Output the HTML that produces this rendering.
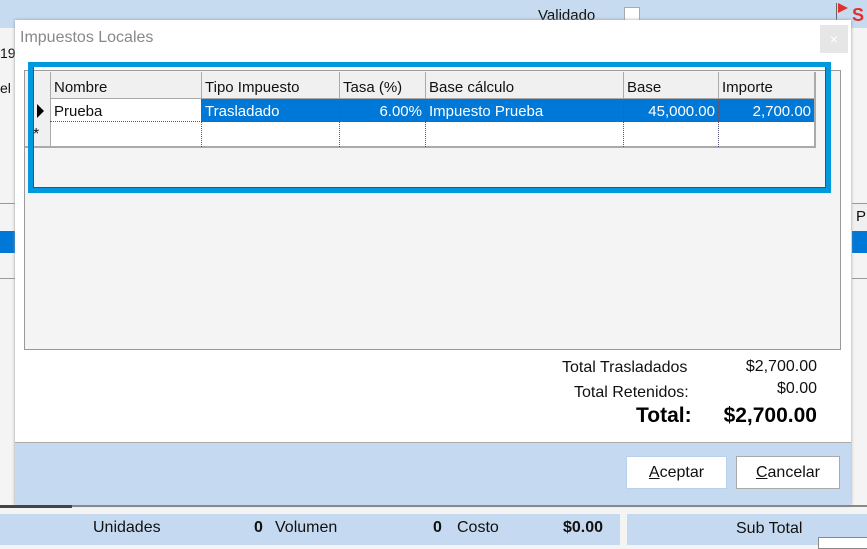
<!DOCTYPE html>
<html><head><style>
body{margin:0;width:867px;height:545px;overflow:hidden;background:#f4f4f4;font-family:"Liberation Sans",sans-serif;position:relative}
.a{position:absolute}
.t{font-size:15px;color:#111}
.n{font-family:"Liberation Sans Narrow","Liberation Sans",sans-serif}
</style></head><body>
<div class="a" style="left:0;top:0;width:867px;height:28px;background:#c6daf0"></div>
<div class="a t" style="left:538px;top:7px">Validado</div>
<div class="a" style="left:624px;top:7px;width:14px;height:14px;background:#fff;border:1px solid #aaa"></div>
<div class="a" style="left:838px;top:3px;width:0;height:0;border-left:10px solid #e0302a;border-top:5px solid transparent;border-bottom:5px solid transparent"></div>
<div class="a" style="left:836px;top:3px;width:1px;height:18px;background:#666"></div>
<div class="a" style="left:852px;top:5px;color:#e0302a;font-weight:bold;font-size:18px">S</div>
<div class="a t" style="left:0;top:45px;font-size:14px">19</div>
<div class="a t" style="left:0;top:80px;font-size:14px">el</div>
<div class="a" style="left:0;top:203px;width:15px;height:1px;background:#999"></div>
<div class="a" style="left:0;top:231px;width:15px;height:22px;background:#0078d7"></div>
<div class="a" style="left:0;top:278px;width:15px;height:1px;background:#999"></div>
<div class="a" style="left:852px;top:203px;width:15px;height:27px;background:#f0f0f0;border-top:1px solid #999"></div>
<div class="a t" style="left:856px;top:208px">P</div>
<div class="a" style="left:852px;top:231px;width:15px;height:22px;background:#0078d7"></div>
<div class="a" style="left:852px;top:278px;width:15px;height:1px;background:#999"></div>
<!-- dialog -->
<div class="a" style="left:15px;top:20px;width:836px;height:485px;background:#fff;box-shadow:0 0 3px #999"></div>
<div class="a" style="left:20px;top:29px;font-size:16px;color:#888">Impuestos Locales</div>
<div class="a" style="left:820px;top:25px;width:28px;height:28px;background:#e6e6e6;color:#fff;text-align:center;line-height:28px;font-size:14px">×</div>
<div class="a" style="left:24px;top:70px;width:815px;height:278px;background:#f4f4f4;border:1px solid #999"></div>
<!-- grid -->
<div class="a" style="left:25px;top:72px;width:789px;height:75px;border:1px solid #aaa;border-top:none;background:#fff"></div>
<div class="a" style="left:25px;top:72px;width:789px;height:26px;background:#f0f0f0;border-bottom:1px solid #aaa"></div>
<div class="a" style="left:25px;top:72px;width:25px;height:75px;background:#f0f0f0;border-right:1px solid #aaa"></div>
<div class="a" style="left:201px;top:99px;width:613px;height:23px;background:#0078d7"></div>
<div class="a" style="left:50px;top:121px;width:764px;border-top:1px dotted #557"></div>
<div class="a" style="left:25px;top:146px;width:789px;border-top:1px solid #aaa"></div>
<div class="a" style="left:50px;top:72px;width:151px;height:75px;border-right:1px dotted #557"></div>
<div class="a" style="left:339px;top:72px;width:0;height:75px;border-right:1px dotted #557"></div>
<div class="a" style="left:425px;top:72px;width:0;height:75px;border-right:1px dotted #557"></div>
<div class="a" style="left:623px;top:72px;width:0;height:75px;border-right:1px dotted #557"></div>
<div class="a" style="left:718px;top:72px;width:0;height:75px;border-right:1px dotted #557"></div>
<div class="a" style="left:814px;top:72px;width:0;height:75px;border-right:1px solid #aaa"></div>
<div class="a" style="left:51px;top:72px;width:763px;height:26px;background:#f0f0f0;border-bottom:1px solid #aaa"></div>
<div class="a" style="left:201px;top:72px;width:1px;height:26px;background:#aaa"></div>
<div class="a" style="left:339px;top:72px;width:1px;height:26px;background:#aaa"></div>
<div class="a" style="left:425px;top:72px;width:1px;height:26px;background:#aaa"></div>
<div class="a" style="left:623px;top:72px;width:1px;height:26px;background:#aaa"></div>
<div class="a" style="left:718px;top:72px;width:1px;height:26px;background:#aaa"></div>
<div class="a t" style="left:54px;top:79px">Nombre</div>
<div class="a t" style="left:205px;top:79px">Tipo Impuesto</div>
<div class="a t" style="left:343px;top:79px">Tasa (%)</div>
<div class="a t" style="left:429px;top:79px">Base cálculo</div>
<div class="a t" style="left:627px;top:79px">Base</div>
<div class="a t" style="left:722px;top:79px">Importe</div>
<div class="a" style="left:37px;top:104px;width:0;height:0;border-left:7px solid #000;border-top:7px solid transparent;border-bottom:7px solid transparent"></div>
<div class="a t" style="left:54px;top:103px">Prueba</div>
<div class="a t" style="left:205px;top:103px;color:#fff">Trasladado</div>
<div class="a t" style="left:339px;top:103px;width:83px;text-align:right;color:#fff">6.00%</div>
<div class="a t" style="left:429px;top:103px;color:#fff">Impuesto Prueba</div>
<div class="a t" style="left:623px;top:103px;width:92px;text-align:right;color:#fff">45,000.00</div>
<div class="a t" style="left:718px;top:103px;width:93px;text-align:right;color:#fff">2,700.00</div>
<div class="a t" style="left:33px;top:126px;font-size:16px">*</div>
<!-- highlight box -->
<div class="a" style="left:28px;top:62px;width:793px;height:121px;border:5px solid #0099dd"></div>
<div class="a" style="left:33px;top:67px;width:793px;height:121px;border-left:1px solid #d0103a;border-bottom:1px solid #d0103a;border-right:1px solid #d0103a;box-sizing:border-box"></div>
<!-- totals -->
<div class="a t n" style="left:562px;top:359px;font-size:16px">Total Trasladados</div>
<div class="a t n" style="left:700px;top:358px;width:117px;text-align:right;font-size:16px">$2,700.00</div>
<div class="a t n" style="left:574px;top:384px;font-size:16px">Total Retenidos:</div>
<div class="a t n" style="left:700px;top:380px;width:117px;text-align:right;font-size:16px">$0.00</div>
<div class="a n" style="left:636px;top:404px;font-size:21px;font-weight:bold;color:#000">Total:</div>
<div class="a n" style="left:700px;top:404px;width:117px;text-align:right;font-size:21px;font-weight:bold;color:#000">$2,700.00</div>
<!-- buttons bar -->
<div class="a" style="left:15px;top:442px;width:836px;height:63px;background:#c5daf0;border-top:1px solid #aaa"></div>
<div class="a t n" style="left:626px;top:456px;width:99px;height:31px;background:#fff;border:1px solid #b9d2ec;text-align:center;line-height:31px;font-size:16px"><u>A</u>ceptar</div>
<div class="a t n" style="left:736px;top:456px;width:102px;height:31px;background:#fff;border:1px solid #aaa;text-align:center;line-height:31px;font-size:16px"><u>C</u>ancelar</div>
<!-- bottom -->
<div class="a" style="left:0;top:505px;width:867px;height:2px;background:#888"></div>
<div class="a" style="left:0;top:505px;width:72px;height:3px;background:#444"></div>
<div class="a" style="left:0;top:514px;width:620px;height:31px;background:#c5daf0"></div>
<div class="a" style="left:627px;top:514px;width:240px;height:31px;background:#c5daf0"></div>
<div class="a t n" style="left:93px;top:519px;font-size:16px">Unidades</div>
<div class="a t n" style="left:254px;top:519px;font-weight:bold;font-size:16px">0</div>
<div class="a t n" style="left:275px;top:519px;font-size:16px">Volumen</div>
<div class="a t n" style="left:433px;top:519px;font-weight:bold;font-size:16px">0</div>
<div class="a t n" style="left:457px;top:519px;font-size:16px">Costo</div>
<div class="a t n" style="left:563px;top:519px;font-weight:bold;font-size:16px">$0.00</div>
<div class="a t n" style="left:736px;top:520px;font-size:16px">Sub Total</div>
<div class="a" style="left:818px;top:537px;width:49px;height:10px;background:#fff;border:1px solid #888"></div>
</body></html>
